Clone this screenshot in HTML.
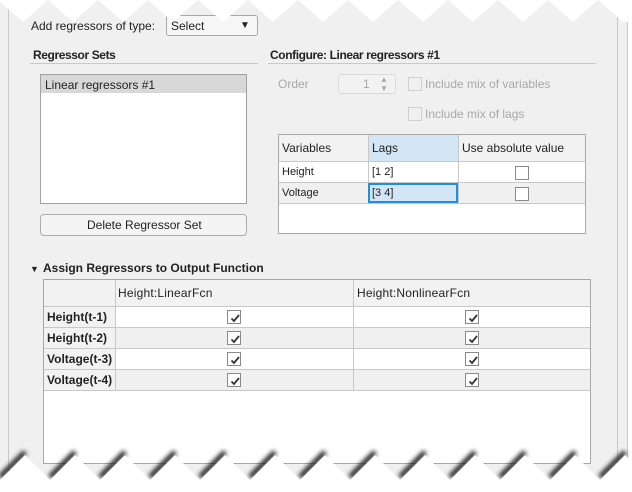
<!DOCTYPE html>
<html><head><style>
*{margin:0;padding:0;box-sizing:border-box}
body{width:632px;height:492px;background:#f0f0f0;position:relative;overflow:hidden;font-family:"Liberation Sans",Arial,sans-serif;font-size:12px;color:#222}
.a{position:absolute}
.t{position:absolute;white-space:nowrap;line-height:14px}
.b{font-weight:bold;letter-spacing:-0.4px}
.dis{color:#a8a8a8}
.cb{position:absolute;width:14px;height:14px;border:1px solid #8a8a8a;background:#fff}
.cbd{position:absolute;width:14px;height:14px;border:1px solid #d0d0d0;background:#f0f0f0}
.ck{position:absolute;width:14px;height:14px;border:1px solid #8a8a8a;background:#fff}
.ck svg{position:absolute;left:1px;top:1px}
</style></head><body>
<div class="a" style="left:8px;top:0;width:1px;height:492px;background:#c8c8c8"></div>
<div class="a" style="left:617px;top:0;width:1px;height:492px;background:#c8c8c8"></div>
<div class="a" style="left:627px;top:0;width:5px;height:492px;background:#fff;border-left:1px solid #c8c8c8"></div>

<div class="t" style="left:31px;top:19px">Add regressors of type:</div>
<div class="a" style="left:166px;top:15px;width:92px;height:21px;border:1px solid #a8a8a8;border-radius:3px;background:#f6f6f6"></div>
<div class="t" style="left:171px;top:19px">Select</div>
<div class="t" style="left:240px;top:19px;font-size:10px">▼</div>

<div class="t b" style="left:33px;top:48px">Regressor Sets</div>
<div class="a" style="left:30px;top:63px;width:228px;height:1px;background:#c8c8c8"></div>
<div class="t b" style="left:270px;top:48px">Configure: Linear regressors #1</div>
<div class="a" style="left:268px;top:63px;width:328px;height:1px;background:#c8c8c8"></div>

<div class="a" style="left:40px;top:74px;width:207px;height:130px;border:1px solid #a0a0a0;background:#fff"></div>
<div class="a" style="left:41px;top:75px;width:205px;height:18px;background:#d8d8d8"></div>
<div class="t" style="left:45px;top:78px">Linear regressors #1</div>

<div class="a" style="left:40px;top:214px;width:207px;height:22px;border:1px solid #adadad;border-radius:4px;background:#f4f4f4"></div>
<div class="t" style="left:87px;top:218px">Delete Regressor Set</div>

<div class="t dis" style="left:278px;top:77px">Order</div>
<div class="a" style="left:338px;top:74px;width:58px;height:20px;border:1px solid #dadada;border-radius:3px;background:#f2f2f2"></div>
<div class="t dis" style="left:363px;top:77px">1</div>
<div class="t dis" style="left:380px;top:73px;font-size:8px">▲</div>
<div class="t dis" style="left:380px;top:82px;font-size:8px">▼</div>
<div class="cbd" style="left:408px;top:77px"></div>
<div class="t dis" style="left:425px;top:77px">Include mix of variables</div>
<div class="cbd" style="left:408px;top:107px"></div>
<div class="t dis" style="left:425px;top:107px">Include mix of lags</div>

<div class="a" style="left:278px;top:134px;width:308px;height:100px;border:1px solid #a8a8a8;background:#fff"></div>
<div class="a" style="left:279px;top:135px;width:89px;height:27px;background:#f2f2f2"></div>
<div class="a" style="left:368px;top:135px;width:90px;height:27px;background:#d3e6f5"></div>
<div class="a" style="left:458px;top:135px;width:127px;height:27px;background:#f2f2f2"></div>
<div class="a" style="left:279px;top:182px;width:306px;height:21px;background:#f0f0f0"></div>
<div class="a" style="left:279px;top:161px;width:306px;height:1px;background:#c8c8c8"></div>
<div class="a" style="left:279px;top:182px;width:306px;height:1px;background:#c8c8c8"></div>
<div class="a" style="left:279px;top:203px;width:306px;height:1px;background:#c8c8c8"></div>
<div class="a" style="left:368px;top:135px;width:1px;height:68px;background:#c8c8c8"></div>
<div class="a" style="left:458px;top:135px;width:1px;height:68px;background:#c8c8c8"></div>
<div class="a" style="left:368px;top:183px;width:90px;height:20px;border:2px solid #1e8fe0;background:#d3e6f5"></div>
<div class="t" style="left:282px;top:141px">Variables</div>
<div class="t" style="left:372px;top:141px">Lags</div>
<div class="t" style="left:462px;top:141px">Use absolute value</div>
<div class="t" style="left:282px;top:165px;font-size:11px">Height</div>
<div class="t" style="left:372px;top:165px;font-size:11px">[1 2]</div>
<div class="t" style="left:282px;top:186px;font-size:11px">Voltage</div>
<div class="t" style="left:372px;top:186px;font-size:11px">[3 4]</div>
<div class="cb" style="left:515px;top:166px"></div>
<div class="cb" style="left:515px;top:187px"></div>

<div class="t" style="left:30px;top:262px;font-size:9px">▼</div>
<div class="t b" style="left:43px;top:261px;letter-spacing:0">Assign Regressors to Output Function</div>

<div class="a" style="left:43px;top:279px;width:548px;height:185px;border:1px solid #a8a8a8;background:#fff"></div>
<div class="a" style="left:44px;top:280px;width:546px;height:26px;background:#f2f2f2"></div>
<div class="a" style="left:44px;top:306px;width:71px;height:84px;background:#f2f2f2"></div>
<div class="a" style="left:115px;top:327px;width:475px;height:21px;background:#f0f0f0"></div>
<div class="a" style="left:115px;top:369px;width:475px;height:21px;background:#f0f0f0"></div>
<div class="a" style="left:44px;top:306px;width:546px;height:1px;background:#c8c8c8"></div>
<div class="a" style="left:44px;top:327px;width:546px;height:1px;background:#c8c8c8"></div>
<div class="a" style="left:44px;top:348px;width:546px;height:1px;background:#c8c8c8"></div>
<div class="a" style="left:44px;top:369px;width:546px;height:1px;background:#c8c8c8"></div>
<div class="a" style="left:44px;top:390px;width:546px;height:1px;background:#c8c8c8"></div>
<div class="a" style="left:115px;top:280px;width:1px;height:110px;background:#c8c8c8"></div>
<div class="a" style="left:353px;top:280px;width:1px;height:110px;background:#c8c8c8"></div>
<div class="t" style="left:118px;top:286px;letter-spacing:0.2px">Height:LinearFcn</div>
<div class="t" style="left:357px;top:286px;letter-spacing:0.2px">Height:NonlinearFcn</div>
<div class="t" style="left:47px;top:310px;font-weight:bold">Height(t-1)</div>
<div class="t" style="left:47px;top:331px;font-weight:bold">Height(t-2)</div>
<div class="t" style="left:47px;top:352px;font-weight:bold">Voltage(t-3)</div>
<div class="t" style="left:47px;top:373px;font-weight:bold">Voltage(t-4)</div>

<svg width="0" height="0" style="position:absolute"><defs><symbol id="m" viewBox="0 0 12 12"><path d="M2.5 6.5 L5 9 L10 3" fill="none" stroke="#333" stroke-width="1.8"/></symbol></defs></svg>
<div class="ck" style="left:227px;top:310px"><svg width="12" height="12"><use href="#m"/></svg></div>
<div class="ck" style="left:227px;top:331px"><svg width="12" height="12"><use href="#m"/></svg></div>
<div class="ck" style="left:227px;top:352px"><svg width="12" height="12"><use href="#m"/></svg></div>
<div class="ck" style="left:227px;top:373px"><svg width="12" height="12"><use href="#m"/></svg></div>
<div class="ck" style="left:465px;top:310px"><svg width="12" height="12"><use href="#m"/></svg></div>
<div class="ck" style="left:465px;top:331px"><svg width="12" height="12"><use href="#m"/></svg></div>
<div class="ck" style="left:465px;top:352px"><svg width="12" height="12"><use href="#m"/></svg></div>
<div class="ck" style="left:465px;top:373px"><svg width="12" height="12"><use href="#m"/></svg></div>

<svg class="a" style="left:0;top:0" width="632" height="492">
<defs><filter id="f" x="-10%" y="-50%" width="120%" height="200%"><feGaussianBlur stdDeviation="2.2"/></filter></defs>
<polygon fill="#fff" points="0,0 632,0 632,22 623,22 598,0 573,22 548,0 523,22 498,0 473,22 448,0 423,22 398,0 373,22 348,0 323,22 298,0 273,22 248,0 223,22 198,0 173,22 148,0 123,22 98,0 73,22 48,0 23,22 0,2"/>
<path fill="none" stroke="#222" stroke-width="5" filter="url(#f)" d="M0,477 L25,452 M50,477 L75,452 M100,477 L125,452 M150,477 L175,452 M200,477 L225,452 M250,477 L275,452 M300,477 L325,452 M350,477 L375,452 M400,477 L425,452 M450,477 L475,452 M500,477 L525,452 M550,477 L575,452 M600,477 L625,452"/>
<polygon fill="#fff" points="0,480 25,455 50,480 75,455 100,480 125,455 150,480 175,455 200,480 225,455 250,480 275,455 300,480 325,455 350,480 375,455 400,480 425,455 450,480 475,455 500,480 525,455 550,480 575,455 600,480 625,455 650,480 650,492 0,492"/>
</svg>
</body></html>
